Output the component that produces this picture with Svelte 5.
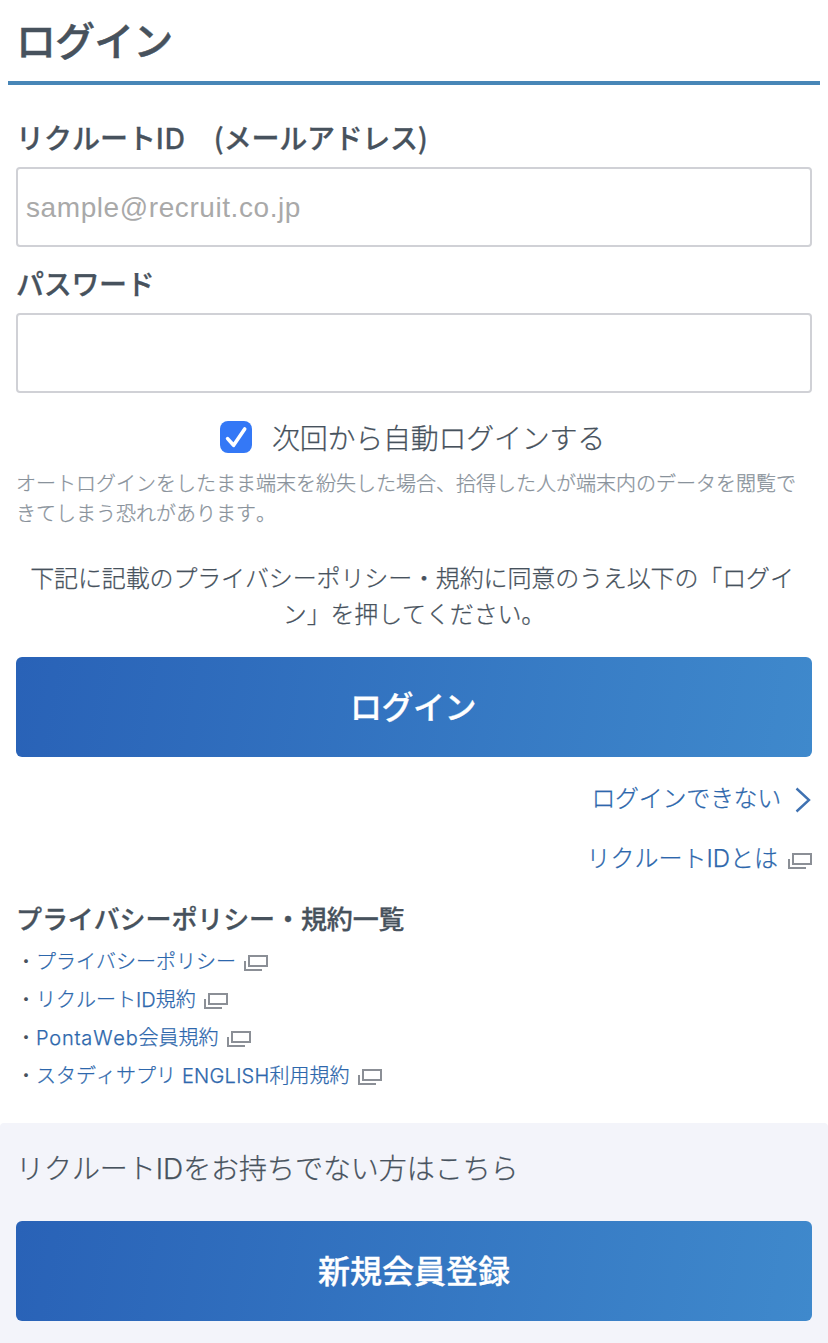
<script lang="ts">
	let email = '';
	let password = '';
	let autoLogin = true;

	const terms = [
		{ before: 'プライバシーポリシー', latin: '', after: '' },
		{ before: 'リクルート', latin: 'ID', after: '規約' },
		{ before: '', latin: 'PontaWeb', after: '会員規約' },
		{ before: 'スタディサプリ', latin: ' ENGLISH', after: '利用規約' }
	];
</script>

{#snippet windowIcon()}
	<svg class="window" width="24" height="16" viewBox="0 0 24 16" aria-hidden="true">
		<path d="M5 1H23V11H5Z M1 6V15H18" />
	</svg>
{/snippet}

<main>
	<h1>ログイン</h1>

	<form on:submit|preventDefault>
		<label class="field-label" for="email">リクルート<span class="latin">ID</span>　(<span class="mail">メールアドレス)</span></label>
		<input id="email" class="field" type="text" placeholder="sample@recruit.co.jp" bind:value={email} />

		<label class="field-label second" for="password">パスワード</label>
		<input id="password" class="field" type="password" bind:value={password} />

		<label class="auto">
			<input type="checkbox" bind:checked={autoLogin} />
			<span class="box" class:on={autoLogin}>
				<svg width="32" height="32" viewBox="0 0 32 32" aria-hidden="true">
					<path d="M7.6 17.6L13.6 24.3L24.7 8" />
				</svg>
			</span>
			<span class="auto-text">次回から自動ログインする</span>
		</label>
		<p class="caution">
			オートログインをしたまま端末を紛失した場合、拾得した人が端末内のデータを閲覧で<br />きてしまう恐れがあります。
		</p>

		<p class="agree">
			下記に記載のプライバシーポリシー・規約に同意のうえ以下の「ログイ<br />ン」を押してください。
		</p>
		<button class="btn" type="submit">ログイン</button>
	</form>

	<nav class="help">
		<a href="#trouble">
			<span class="trouble">ログインできない</span>
			<svg class="chevron" width="16" height="26" viewBox="0 0 16 26" aria-hidden="true">
				<path d="M1.5 1.5L14 13L1.5 24.5" />
			</svg>
		</a>
		<a href="#about">
			<span>リクルート<span class="latin">ID</span>とは</span>
			{@render windowIcon()}
		</a>
	</nav>

	<section class="terms">
		<h2>プライバシーポリシー・規約一覧</h2>
		<ul>
			{#each terms as term}
				<li>
					<span class="dot">・</span>
					<a href="#terms">{term.before}<span class="latin">{term.latin}</span>{term.after}</a>
					{@render windowIcon()}
				</li>
			{/each}
		</ul>
	</section>
</main>

<section class="register">
	<p>リクルート<span class="latin">ID</span>をお持ちでない方はこちら</p>
	<button class="btn" type="button">新規会員登録</button>
</section>

<style>
	:global(body) {
		background: #fff;
	}

	:global(#app) {
		font-family: 'Noto Sans CJK JP', sans-serif;
		font-weight: 300;
		font-kerning: none;
		color: #47525d;
		-webkit-text-stroke: 0.25px;
	}

	h1,
	h2,
	p,
	ul {
		margin: 0;
		padding: 0;
	}

	a {
		color: #2d67ac;
		text-decoration: none;
	}

	.latin {
		font-family: Inter, sans-serif;
		line-height: 1;
		white-space: pre;
	}

	h1 {
		height: 81px;
		margin: 0 8px;
		padding-left: 8px;
		border-bottom: 4px solid #4886b7;
		font-size: 40px;
		font-weight: 500;
		line-height: 78px;
		letter-spacing: -0.9px;
		-webkit-text-stroke: 0.5px;
	}

	form {
		padding: 32px 16px 0;
	}

	.field-label {
		display: block;
		height: 50px;
		font-size: 28px;
		font-weight: 500;
		line-height: 40px;
		white-space: pre;
		-webkit-text-stroke: 0.3px;
	}

	.field-label .latin {
		letter-spacing: 1px;
	}

	.mail {
		letter-spacing: -0.3px;
	}

	.second {
		height: 48px;
		margin-top: 18px;
		line-height: 36px;
		letter-spacing: -0.3px;
	}

	.field {
		display: block;
		box-sizing: border-box;
		width: 100%;
		height: 80px;
		padding: 2px 8px 0;
		border: 2px solid #d0d1d6;
		border-radius: 4px;
		outline: none;
		background: #fff;
		font-family: 'Liberation Sans', sans-serif;
		font-size: 28px;
		letter-spacing: 0.58px;
		color: #47525d;
		-webkit-text-stroke: 0;
	}

	.field::placeholder {
		color: #a9a9a9;
	}

	.auto {
		display: flex;
		align-items: center;
		gap: 20px;
		height: 42px;
		margin-top: 23px;
		padding-left: 204px;
		font-size: 28px;
		letter-spacing: -0.25px;
	}

	.auto input {
		position: absolute;
		opacity: 0;
	}

	.box {
		width: 32px;
		height: 32px;
		border-radius: 8px;
		background: #fff;
	}

	.box.on {
		background: #3478f6;
	}

	.box path {
		fill: none;
		stroke: #fff;
		stroke-width: 3.6;
		stroke-linecap: round;
		stroke-linejoin: round;
	}

	.caution {
		margin-top: 10px;
		font-size: 20px;
		line-height: 30px;
		color: #89929b;
		white-space: nowrap;
	}

	.agree {
		margin-top: 31px;
		font-size: 24px;
		line-height: 36px;
		letter-spacing: -0.14px;
		text-align: center;
		text-indent: -4px;
		white-space: nowrap;
	}

	.btn {
		display: block;
		width: 100%;
		height: 100px;
		padding: 0 0 5px;
		border: 0;
		border-radius: 6px;
		background: linear-gradient(100deg, #2962b7, #3f89cc);
		font-family: inherit;
		font-size: 32px;
		font-weight: 500;
		color: #fff;
		-webkit-text-stroke: 0.3px;
	}

	.agree + .btn {
		margin-top: 26px;
		padding: 0 2px 5px 0;
		letter-spacing: -0.5px;
	}

	.help {
		display: flex;
		flex-direction: column;
		align-items: flex-end;
		gap: 24px;
		padding: 22px 16px 0;
		font-size: 24px;
		line-height: 36px;
	}

	.help a {
		display: flex;
		align-items: center;
		gap: 10px;
	}

	.trouble {
		margin-right: 3px;
		letter-spacing: -0.3px;
	}

	.chevron {
		margin: 6px 1px 0 1px;
	}

	.chevron path {
		fill: none;
		stroke: #3f72b2;
		stroke-width: 2.4;
	}

	.window {
		margin-top: 7px;
	}

	.window path {
		fill: none;
		stroke: #8b8f96;
		stroke-width: 2;
	}

	.terms {
		padding: 24px 16px 28px;
	}

	h2 {
		margin-bottom: 5px;
		font-size: 26px;
		font-weight: 500;
		line-height: 38px;
		letter-spacing: -0.1px;
		-webkit-text-stroke: 0.3px;
	}

	ul {
		padding-bottom: 1px;
	}

	li {
		display: flex;
		align-items: center;
		height: 38px;
		font-size: 20px;
		line-height: 38px;
	}

	li .window {
		margin-top: 4px;
		margin-left: 8px;
	}

	.dot {
		-webkit-text-stroke: 0;
	}

	li:nth-child(3) .latin {
		letter-spacing: 0.8px;
	}

	li:nth-child(4) .latin {
		letter-spacing: 0.25px;
	}

	.register {
		height: 220px;
		box-sizing: border-box;
		padding: 24px 16px 0;
		border-radius: 4px 4px 0 0;
		background: #f3f4fa;
	}

	.register p {
		height: 74px;
		font-size: 28px;
		line-height: 40px;
		letter-spacing: -0.05px;
	}
</style>
